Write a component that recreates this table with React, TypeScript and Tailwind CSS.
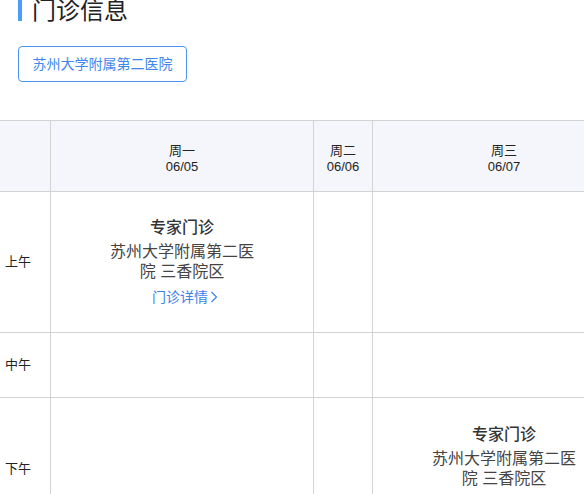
import React from "react";

const days = [
  { name: "周一", date: "06/05", w: "w-[263px]" },
  { name: "周二", date: "06/06", w: "w-[59px]" },
  { name: "周三", date: "06/07", w: "w-[263px]" },
  { name: "周四", date: "06/08", w: "w-[263px]" },
];

const slots = [
  { label: "上午", h: "h-[141px]", visits: [0] },
  { label: "中午", h: "h-[65px]", visits: [] as number[] },
  { label: "下午", h: "h-[142px]", visits: [2] },
];

const font = "font-['Liberation_Sans','Noto_Sans_CJK_SC',sans-serif]";

const Visit: React.FC<{ showLink?: boolean }> = ({ showLink = true }) => (
  <div className="flex flex-col items-center text-center">
    <div className="text-[16px] leading-[22px] font-medium text-[#333]">专家门诊</div>
    <div className="mt-[3px] w-[150px] text-[16px] leading-[20px] text-[#444]">
      苏州大学附属第二医院 三香院区
    </div>
    {showLink && (
      <a className="mt-[5px] flex items-center pl-[6px] text-[14px] leading-[20px] text-[#3b82ea]">
        门诊详情
        <svg width="8" height="12" viewBox="0 0 8 12" className="ml-[2px]">
          <polyline points="1.5,1 6.5,6 1.5,11" fill="none" stroke="currentColor" strokeWidth="1.2" />
        </svg>
      </a>
    )}
  </div>
);

export default function App() {
  return (
    <div className={`h-[494px] w-[584px] overflow-hidden bg-white ${font}`}>
      <div className="px-[18px]">
        <div className="-mt-[11px] h-8 border-l-4 border-[#4b9ef7] pt-[6px] pl-[10px] text-[24px] leading-8 text-[#222]">
          门诊信息
        </div>
        <button className="mt-[25px] h-[36px] w-[169px] rounded-[4px] border border-[#4c93f3] text-[14px] text-[#3f86ee]">
          苏州大学附属第二医院
        </button>
      </div>

      <div className="mt-[38px] w-max border-t border-[#d3d3d3]">
        <div className="flex bg-[#f5f6fb]">
          <div className="h-[71px] w-[51px] border-b border-r border-[#d3d3d3]" />
          {days.map((d) => (
            <div
              key={d.name}
              className={`flex h-[71px] ${d.w} flex-col items-center justify-center border-b border-r border-[#d3d3d3] pt-[5px] text-[13px] leading-[16px] text-[#222]`}
            >
              <span>{d.name}</span>
              <span>{d.date}</span>
            </div>
          ))}
        </div>
        {slots.map((s) => (
          <div key={s.label} className="flex">
            <div
              className={`flex ${s.h} w-[51px] items-center border-b border-r border-[#d3d3d3] pl-[5px] text-[13px] text-[#222]`}
            >
              {s.label}
            </div>
            {days.map((d, i) => (
              <div
                key={d.name}
                className={`flex ${s.h} ${d.w} items-center justify-center border-b border-r border-[#d3d3d3]`}
              >
                {s.visits.includes(i) && <Visit />}
              </div>
            ))}
          </div>
        ))}
      </div>
    </div>
  );
}
